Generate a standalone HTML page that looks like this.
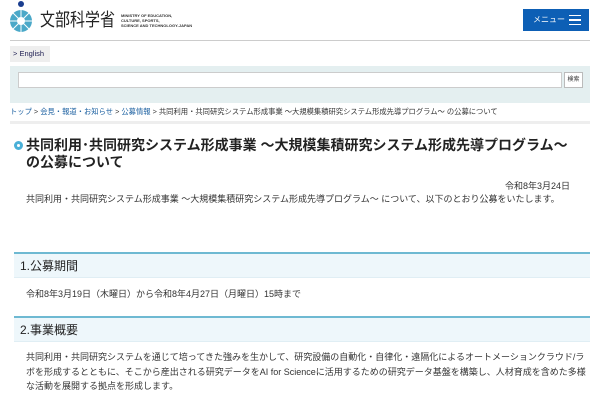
<!DOCTYPE html>
<html><head><meta charset="utf-8"><style>
*{margin:0;padding:0;box-sizing:border-box}
body{width:600px;height:400px;overflow:hidden;background:#fff;font-family:"Liberation Sans","Noto Sans CJK JP",sans-serif;color:#333;position:relative}
.a{position:absolute}
</style></head><body>
<svg class="a" style="left:6px;top:0" width="30" height="34" viewBox="0 0 30 34">
<circle cx="15" cy="4" r="3" fill="#1a3d8f"/>
<g fill="#4aa8c8"><circle cx="15" cy="21" r="11"/></g>
<circle cx="15" cy="21" r="4" fill="#fff"/>
<g stroke="#fff" stroke-width="1"><line x1="15" y1="10" x2="15" y2="32"/><line x1="4" y1="21" x2="26" y2="21"/><line x1="7" y1="13" x2="23" y2="29"/><line x1="23" y1="13" x2="7" y2="29"/></g>
</svg>
<div class="a" style="left:40px;top:7px;font-size:15px;color:#222;letter-spacing:0;transform:scaleY(1.2);transform-origin:top left">文部科学省</div>
<div class="a" style="left:121px;top:13px;font-size:4px;line-height:5px;color:#333;font-weight:bold">MINISTRY OF EDUCATION,<br>CULTURE, SPORTS,<br>SCIENCE AND TECHNOLOGY-JAPAN</div>
<div class="a" style="left:523px;top:9px;width:66px;height:22px;background:#0d5fb5;color:#fff;font-size:8px;line-height:22px;padding-left:10px">メニュー
<div class="a" style="left:46px;top:6px;width:12px;height:10px;border-top:1.5px solid #fff;border-bottom:1.5px solid #fff"></div><div class="a" style="left:46px;top:10px;width:12px;height:1.5px;background:#fff"></div></div>
<div class="a" style="left:10px;top:40px;width:580px;height:1px;background:#ccc"></div>
<div class="a" style="left:10px;top:46px;width:40px;height:16px;background:#eee;font-size:7.5px;line-height:16px;padding-left:3px;color:#225">&gt; English</div>
<div class="a" style="left:10px;top:66px;width:580px;height:37px;background:#e4eff0"></div>
<div class="a" style="left:18px;top:72px;width:544px;height:16px;background:#fff;border:1px solid #ccc"></div>
<div class="a" style="left:564px;top:72px;width:19px;height:16px;background:#fff;border:1px solid #bbb;font-size:6px;line-height:14px;text-align:center">検索</div>
<div class="a" style="left:10px;top:107px;font-size:7.3px;color:#333;white-space:nowrap"><span style="color:#1a5fa0">トップ</span> &gt; <span style="color:#1a5fa0">会見・報道・お知らせ</span> &gt; <span style="color:#1a5fa0">公募情報</span> &gt; 共同利用・共同研究システム形成事業 ～大規模集積研究システム形成先導プログラム～ の公募について</div>
<div class="a" style="left:10px;top:121px;width:580px;height:3px;background:#eee"></div>
<div class="a" style="left:14px;top:141px;width:9px;height:9px;border-radius:50%;background:#fff;border:3px solid #4ab0d8"></div>
<div class="a" style="left:26px;top:137px;font-size:14px;font-weight:bold;line-height:17px;color:#222;white-space:nowrap;letter-spacing:0">共同利用･共同研究システム形成事業 ～大規模集積研究システム形成先導プログラム～<br>の公募について</div>
<div class="a" style="right:30px;top:179px;font-size:9px;color:#333">令和8年3月24日</div>
<div class="a" style="left:26px;top:192px;font-size:9px;color:#333;white-space:nowrap">共同利用・共同研究システム形成事業 ～大規模集積研究システム形成先導プログラム～ について、以下のとおり公募をいたします。</div>
<div class="a" style="left:14px;top:252px;width:576px;height:26px;background:#eef7fb;border-top:2px solid #6eb9d2;border-bottom:1px solid #e0eef4;font-size:12px;line-height:24px;padding-left:6px;color:#222">1.公募期間</div>
<div class="a" style="left:26px;top:287px;font-size:9px;color:#333">令和8年3月19日（木曜日）から令和8年4月27日（月曜日）15時まで</div>
<div class="a" style="left:14px;top:316px;width:576px;height:26px;background:#eef7fb;border-top:2px solid #6eb9d2;border-bottom:1px solid #e0eef4;font-size:12px;line-height:24px;padding-left:6px;color:#222">2.事業概要</div>
<div class="a" style="left:26px;top:350px;width:560px;font-size:9px;line-height:14.5px;color:#333">共同利用・共同研究システムを通じて培ってきた強みを生かして、研究設備の自動化・自律化・遠隔化によるオートメーションクラウド/ラボを形成するとともに、そこから産出される研究データをAI for Scienceに活用するための研究データ基盤を構築し、人材育成を含めた多様な活動を展開する拠点を形成します。</div>
</body></html>
